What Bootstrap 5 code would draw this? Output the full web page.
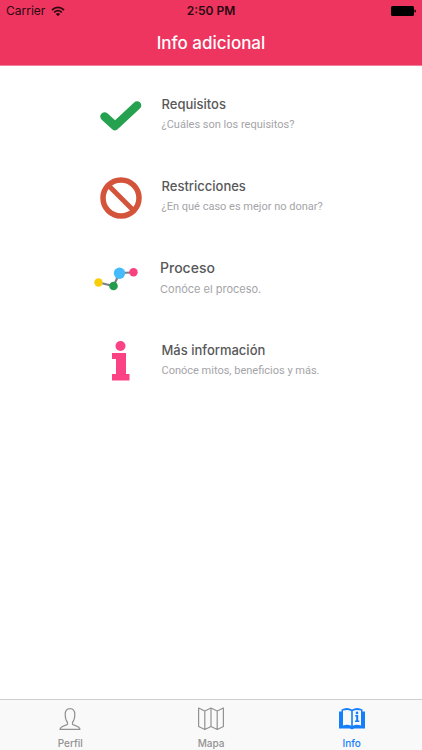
<!DOCTYPE html>
<html lang="es">
<head>
<meta charset="utf-8">
<meta name="viewport" content="width=device-width, initial-scale=1">
<title>Info adicional</title>
<link href="https://cdn.jsdelivr.net/npm/bootstrap@5.3.0/dist/css/bootstrap.min.css" rel="stylesheet">
<style>
body { font-family: Inter, "Liberation Sans", sans-serif; background: #fff; }
.app-header { background: #ed355f; border-bottom: 1px solid #f0809a; }
.status-bar { height: 22px; padding: 0 6px; font-size: 12px; line-height: 22px; color: #2b0910; }
.status-time { font-weight: 600; }
.status-wifi { margin-left: 6px; }
.app-title { font-size: 17px; line-height: 43px; font-weight: 500; color: #fff; }
.topic-list { gap: 38px; padding-top: 28px; }
.topic { gap: 20px; height: 44px; text-decoration: none; }
.topic-icon { width: 42px; height: 44px; }
.topic-icon-wide { width: 46px; }
.topic-text { width: 161px; }
.topic-text-wide { width: 168px; }
.topic-name { font-size: 13px; line-height: 20px; font-weight: 500; color: #58585a; }
.topic-note { font-family: Roboto, "Liberation Sans", sans-serif; font-size: 11px; line-height: 22px; color: #a4a4a8; }
.topic-text-wide .topic-name { font-size: 14px; }
.topic-text-wide .topic-note { font-family: Inter, "Liberation Sans", sans-serif; }
.tab-bar { height: 51px; background: #f9f9f9; border-top: 1px solid #cfcfd1; }
.tab-item { font-size: 10px; line-height: 14px; font-weight: 500; color: #929292; text-decoration: none; padding-top: 5px; }
.tab-item svg { width: 28px; height: 28px; margin-bottom: 3px; }
.tab-item.active { color: #147efb; }
</style>
<script src="https://cdn.jsdelivr.net/npm/bootstrap@5.3.0/dist/js/bootstrap.bundle.min.js"></script>
</head>
<body class="d-flex flex-column min-vh-100">
<header class="app-header">
  <div class="status-bar row g-0">
    <div class="col d-flex align-items-center">
      <span>Carrier</span>
      <svg class="status-wifi" width="14" height="11" viewBox="0 0 14 11" fill="none" stroke="#2b0910" stroke-width="1.7" aria-hidden="true"><path d="M1 4Q7-1.4 13 4M3.200 6.300Q7 2.900 10.800 6.300"/><path d="M4.900 8Q7 6.200 9.100 8L7 10.300Z" fill="#2b0910" stroke="none"/></svg>
    </div>
    <div class="col-auto status-time">2:50 PM</div>
    <div class="col d-flex align-items-center justify-content-end">
      <svg width="26" height="10" viewBox="0 0 26 10" aria-hidden="true"><rect x="1" width="23" height="10" rx="1.500"/><path d="M24.500 3.500Q26 3.500 26 5T24.500 6.500Z"/></svg>
    </div>
  </div>
  <h1 class="app-title text-center m-0">Info adicional</h1>
</header>

<main class="topic-list flex-grow-1 d-flex flex-column">
  <a href="#requisitos" class="topic d-flex justify-content-center">
    <svg class="topic-icon flex-shrink-0" viewBox="0 0 42 44" aria-hidden="true"><path d="M4.500 22.500L15 32L37 11.500" fill="none" stroke="#26a150" stroke-width="8.500" stroke-linecap="round" stroke-linejoin="round"/></svg>
    <div class="topic-text text-nowrap"><div class="topic-name">Requisitos</div><div class="topic-note">¿Cuáles son los requisitos?</div></div>
  </a>
  <a href="#restricciones" class="topic d-flex justify-content-center">
    <svg class="topic-icon flex-shrink-0" viewBox="0 0 42 44" fill="none" stroke="#d3533b" aria-hidden="true"><circle cx="21" cy="22" r="18" stroke-width="5.500"/><path d="M8.500 9.500L33.500 34.500" stroke-width="5"/></svg>
    <div class="topic-text text-nowrap"><div class="topic-name">Restricciones</div><div class="topic-note">¿En qué caso es mejor no donar?</div></div>
  </a>
  <a href="#proceso" class="topic d-flex justify-content-center">
    <svg class="topic-icon topic-icon-wide flex-shrink-0" viewBox="0 0 46 44" aria-hidden="true"><path d="M4.500 24.500L19.500 28L25.500 15L39 14.500" fill="none" stroke="#7c8086" stroke-width="2.200"/><circle cx="4.500" cy="24.500" r="4.200" fill="#f7ce09"/><circle cx="19.500" cy="28" r="4.300" fill="#239c4c"/><circle cx="25.500" cy="15.300" r="5.700" fill="#45bbfb"/><circle cx="39.500" cy="14.300" r="4.200" fill="#fb407e"/></svg>
    <div class="topic-text topic-text-wide text-nowrap"><div class="topic-name">Proceso</div><div class="topic-note">Conóce el proceso.</div></div>
  </a>
  <a href="#mas" class="topic d-flex justify-content-center">
    <svg class="topic-icon flex-shrink-0" viewBox="0 0 42 44" fill="#fb4285" aria-hidden="true"><circle cx="20.500" cy="6" r="5"/><path d="M12 13H26V34H29.500V40.500H12V34H16V19H12Z"/></svg>
    <div class="topic-text text-nowrap"><div class="topic-name">Más información</div><div class="topic-note">Conóce mitos, beneficios y más.</div></div>
  </a>
</main>

<nav class="tab-bar sticky-bottom row g-0 text-center" aria-label="Secciones">
  <a href="#perfil" class="tab-item col d-flex flex-column align-items-center">
    <svg viewBox="0 0 28 28" fill="none" stroke="#929292" stroke-width="1.200" stroke-linejoin="round" aria-hidden="true"><path d="M11.500 17.500C9.800 15.500 9.200 13 9.200 9.500C9.200 5.500 11 3.600 14 3.600S18.800 5.500 18.800 9.500C18.800 13 18.200 15.500 16.500 17.500V19.200C17 20.600 23.500 20.500 24 24.400H4C4.500 20.500 11 20.600 11.500 19.200Z"/></svg>
    Perfil
  </a>
  <a href="#mapa" class="tab-item col d-flex flex-column align-items-center">
    <svg viewBox="0 0 28 28" fill="none" stroke="#929292" stroke-width="1.200" stroke-linejoin="round" aria-hidden="true"><path d="M1.600 3L7.800 6L14 3L20.200 6L26.400 3V21.500L20.200 24.500L14 21.500L7.800 24.500L1.600 21.500ZM7.800 6V24.500M14 3V21.500M20.200 6V24.500"/></svg>
    Mapa
  </a>
  <a href="#info" class="tab-item active col d-flex flex-column align-items-center" aria-current="page">
    <svg viewBox="0 0 28 28" aria-hidden="true"><path d="M1 6.500H3.500V4.500Q9 1.500 14 4.500Q19 1.500 24.500 4.500V6.500H27V23.500H16Q14 25 12 23.500H1Z" fill="#147efb"/><path d="M5 5.600Q9.500 4 13.200 6V20.800Q9.500 18.800 5 20.500ZM14.800 6Q18.500 4 23 5.600V20.500Q18.500 18.800 14.800 20.800Z" fill="#f9f9f9"/><path d="M17.200 10H20.200V15.500H21.300V17H17V15.500H18.200V11.500H17.200Z" fill="#147efb"/><circle cx="19" cy="7.900" r="1.300" fill="#147efb"/></svg>
    Info
  </a>
</nav>
</body>
</html>
